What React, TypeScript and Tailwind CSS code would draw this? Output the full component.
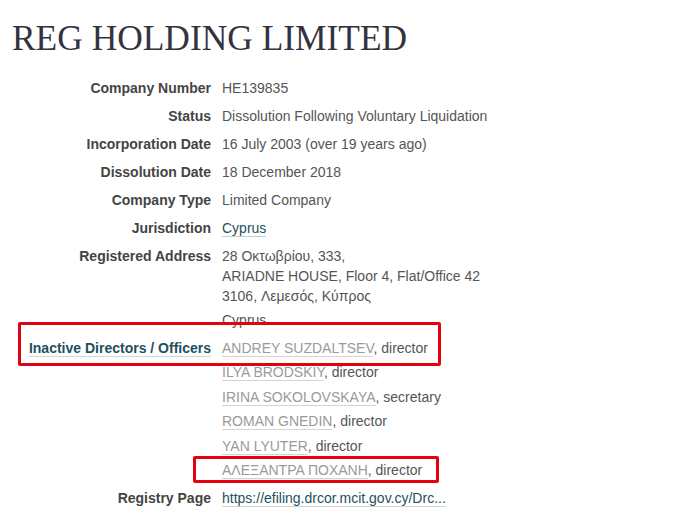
export default function App() {
  const directors = [
    { name: "ANDREY SUZDALTSEV", role: "director" },
    { name: "ILYA BRODSKIY", role: "director" },
    { name: "IRINA SOKOLOVSKAYA", role: "secretary" },
    { name: "ROMAN GNEDIN", role: "director" },
    { name: "YAN LYUTER", role: "director" },
    { name: "ΑΛΕΞΑΝΤΡΑ ΠΟΧΑΝΗ", role: "director" },
  ];

  const simple = [
    ["Company Number", "HE139835"],
    ["Status", "Dissolution Following Voluntary Liquidation"],
    ["Incorporation Date", "16 July 2003 (over 19 years ago)"],
    ["Dissolution Date", "18 December 2018"],
    ["Company Type", "Limited Company"],
  ];

  return (
    <div className="relative min-h-[526px] bg-white pl-3 pt-4 font-['Liberation_Sans',Arial,sans-serif] text-[14px] leading-5 text-[#555]">
      <h1 className="mb-[18px] font-['Liberation_Serif','Times_New_Roman',serif] text-[35.4px] leading-[44px] text-[#333340]">
        REG HOLDING LIMITED
      </h1>

      <div className="flex flex-col gap-2">
        {simple.map(([label, value]) => (
          <div key={label} className="flex gap-[11px]">
            <div className="w-[199px] shrink-0 text-right font-bold text-[#444]">{label}</div>
            <div>{value}</div>
          </div>
        ))}

        <div className="flex gap-[11px]">
          <div className="w-[199px] shrink-0 text-right font-bold text-[#444]">Jurisdiction</div>
          <div>
            <span className="border-b border-[#b9d3d9] text-[#1f4f5f]">Cyprus</span>
          </div>
        </div>

        <div className="flex gap-[11px]">
          <div className="w-[199px] shrink-0 text-right font-bold text-[#444]">Registered Address</div>
          <div className="flex flex-col gap-1">
            <div>
              28 Οκτωβρίου, 333,
              <br />
              ARIADNE HOUSE, Floor 4, Flat/Office 42
              <br />
              3106, Λεμεσός, Κύπρος
            </div>
            <div>Cyprus</div>
          </div>
        </div>

        <div className="flex gap-[11px]">
          <div className="w-[199px] shrink-0 text-right font-bold">
            <span className="border-b border-[#c5d9de] text-[#1f4f5f]">Inactive Directors / Officers</span>
          </div>
          <div className="flex flex-col gap-[4.4px]">
            {directors.map((d) => (
              <div key={d.name}>
                <span className="border-b border-[#d4d4d4] text-[#9a9a9a]">{d.name}</span>, {d.role}
              </div>
            ))}
          </div>
        </div>

        <div className="flex gap-[11px]">
          <div className="w-[199px] shrink-0 text-right font-bold text-[#444]">Registry Page</div>
          <div>
            <span className="border-b border-[#d4d4d4] text-[#1f4f5f]">https://efiling.drcor.mcit.gov.cy/Drc...</span>
          </div>
        </div>
      </div>

      {/* annotation boxes */}
      <div className="pointer-events-none absolute left-[18px] top-[322px] h-[44px] w-[423px] rounded-[2px] border-[3px] border-[#e3000f]" />
      <div className="pointer-events-none absolute left-[193px] top-[456px] h-[27px] w-[246px] rounded-[2px] border-[3px] border-[#e3000f]" />
    </div>
  );
}
